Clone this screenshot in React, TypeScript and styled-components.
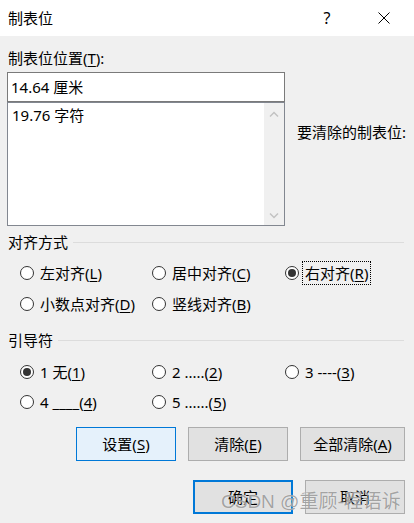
import React from "react";
import styled, { createGlobalStyle } from "styled-components";

const GlobalStyle = createGlobalStyle`
  html, body { margin: 0; padding: 0; background: #f0f0f0; }
  body {
    font-family: "Noto Sans", "Noto Sans CJK SC", sans-serif;
    font-size: 15px;
    color: #000;
  }
  * { box-sizing: border-box; }
`;

const Dialog = styled.div`
  position: relative;
  width: 414px;
  height: 523px;
  background: #f0f0f0;
  overflow: hidden;
`;

const TitleBar = styled.div`
  height: 36px;
  background: #fff;
  display: flex;
  align-items: center;
  padding-left: 8px;
  padding-right: 7px;
`;

const Title = styled.div`
  flex: 1;
  font-size: 15px;
  line-height: 20px;
  font-family: "Noto Sans CJK SC", sans-serif;
`;

const TitleButton = styled.div`
  width: 46px;
  height: 36px;
  display: flex;
  align-items: center;
  justify-content: center;
  font-size: 16px;
  color: #000;
  margin-left: ${(p: { $gap?: number }) => p.$gap ?? 0}px;
`;

const Content = styled.div`
  padding: 0 8px 0 7px;
`;

const FieldLabel = styled.div`
  margin-top: 12px;
  height: 20px;
  line-height: 20px;
  padding-left: 1px;
`;

const U = styled.span`
  text-decoration: underline;
  text-underline-offset: 2px;
`;

const TopRow = styled.div`
  display: flex;
  margin-top: 4px;
`;

const LeftCol = styled.div`
  width: 278px;
  display: flex;
  flex-direction: column;
`;

const Input = styled.div`
  height: 30px;
  border: 1px solid #7a7a7a;
  background: #fff;
  padding: 0 0 0 3px;
  line-height: 28px;
`;

const ListBox = styled.div`
  height: 124px;
  border: 1px solid #828790;
  background: #fff;
  display: flex;
`;

const ListItems = styled.div`
  flex: 1;
  padding: 2px 0 0 4px;
  line-height: 20px;
`;

const ScrollBar = styled.div`
  width: 20px;
  background: #f0f0f0;
  display: flex;
  flex-direction: column;
  justify-content: space-between;
  align-items: center;
  padding: 8px 0 6px;
`;

const SideLabel = styled.div`
  margin-left: 12px;
  margin-top: 50px;
  line-height: 20px;
  white-space: nowrap;
`;

const GroupHeader = styled.div`
  display: flex;
  align-items: center;
  gap: 5px;
  margin-top: ${(p: { $mt: number }) => p.$mt}px;
  height: 20px;
  line-height: 20px;
  padding-left: 1px;
`;

const HeaderLine = styled.div`
  flex: 1;
  height: 1px;
  background: #dcdcdc;
  margin-right: 2px;
`;

const RadioGrid = styled.div`
  display: grid;
  grid-template-columns: 132px 133px 1fr;
  row-gap: ${(p: { $rowGap: number; $mt: number }) => p.$rowGap}px;
  margin-top: ${(p) => p.$mt}px;
  padding-left: 13px;
`;

const RadioItem = styled.div`
  display: flex;
  align-items: center;
  height: 24px;
`;

const RadioCircle = styled.span<{ $checked?: boolean }>`
  width: 14px;
  height: 14px;
  border-radius: 50%;
  border: 1px solid #333;
  background: #fff;
  display: flex;
  align-items: center;
  justify-content: center;
  flex: none;
  &::after {
    content: "";
    width: 8px;
    height: 8px;
    border-radius: 50%;
    background: #333;
    display: ${(p) => (p.$checked ? "block" : "none")};
  }
`;

const RadioText = styled.span<{ $focus?: boolean }>`
  margin-left: ${(p) => (p.$focus ? 3 : 6)}px;
  line-height: 20px;
  white-space: nowrap;
  padding: ${(p) => (p.$focus ? "1px 2px" : "0")};
  border: ${(p) => (p.$focus ? "1px dotted #000" : "none")};
`;

const ButtonRow = styled.div`
  display: flex;
  justify-content: flex-end;
  gap: 12px;
  margin-top: ${(p: { $mt: number }) => p.$mt}px;
  padding-right: 1px;
`;

const Button = styled.div<{ $w: number; $variant?: "hover" | "default" }>`
  width: ${(p) => p.$w}px;
  height: 34px;
  display: flex;
  align-items: center;
  justify-content: center;
  line-height: 20px;
  background: ${(p) => (p.$variant === "hover" ? "#e5f1fb" : "#e1e1e1")};
  border: ${(p) =>
    p.$variant === "hover"
      ? "1px solid #0078d7"
      : p.$variant === "default"
      ? "2px solid #0078d7"
      : "1px solid #adadad"};
`;

const Watermark = styled.div`
  position: absolute;
  left: 221px;
  top: 491px;
  font-family: "Liberation Sans", "Noto Sans CJK SC", sans-serif;
  font-size: 19px;
  line-height: 22px;
  color: rgba(140, 140, 140, 0.8);
  text-shadow: 0 0 1px rgba(255, 255, 255, 0.9);
  white-space: nowrap;
  pointer-events: none;
`;

const Chevron = ({ up }: { up?: boolean }) => (
  <svg width="10" height="6" viewBox="0 0 10 6">
    <path
      d={up ? "M1 5.5 L5 1.5 L9 5.5" : "M1 0.5 L5 4.5 L9 0.5"}
      fill="none"
      stroke="#c2c2c2"
      strokeWidth="1.4"
    />
  </svg>
);

const CloseIcon = () => (
  <svg width="12" height="12" viewBox="0 0 12 12">
    <path d="M0.5 0.5 L11.5 11.5 M11.5 0.5 L0.5 11.5" stroke="#000" strokeWidth="1" />
  </svg>
);

type Opt = { text: string; mk: string; checked?: boolean; focus?: boolean };

const Radio = ({ text, mk, checked, focus }: Opt) => (
  <RadioItem>
    <RadioCircle $checked={checked} />
    <RadioText $focus={focus}>
      {text}(<U>{mk}</U>)
    </RadioText>
  </RadioItem>
);

const alignOpts: Opt[] = [
  { text: "左对齐", mk: "L" },
  { text: "居中对齐", mk: "C" },
  { text: "右对齐", mk: "R", checked: true, focus: true },
  { text: "小数点对齐", mk: "D" },
  { text: "竖线对齐", mk: "B" },
];

const leaderOpts: Opt[] = [
  { text: "1 无", mk: "1", checked: true },
  { text: "2 .....", mk: "2" },
  { text: "3 ----", mk: "3" },
  { text: "4 ____", mk: "4" },
  { text: "5 ......", mk: "5" },
];

export default function App() {
  return (
    <Dialog>
      <GlobalStyle />
      <TitleBar>
        <Title>制表位</Title>
        <TitleButton>?</TitleButton>
        <TitleButton $gap={11}>
          <CloseIcon />
        </TitleButton>
      </TitleBar>
      <Content>
        <FieldLabel>
          制表位位置(<U>T</U>):
        </FieldLabel>
        <TopRow>
          <LeftCol>
            <Input>14.64 厘米</Input>
            <ListBox>
              <ListItems>19.76 字符</ListItems>
              <ScrollBar>
                <Chevron up />
                <Chevron />
              </ScrollBar>
            </ListBox>
          </LeftCol>
          <SideLabel>要清除的制表位:</SideLabel>
        </TopRow>

        <GroupHeader $mt={6}>
          对齐方式
          <HeaderLine />
        </GroupHeader>
        <RadioGrid $rowGap={7} $mt={9}>
          {alignOpts.map((o) => (
            <Radio key={o.mk} {...o} />
          ))}
        </RadioGrid>

        <GroupHeader $mt={14}>
          引导符
          <HeaderLine />
        </GroupHeader>
        <RadioGrid $rowGap={6} $mt={10}>
          {leaderOpts.map((o) => (
            <Radio key={o.mk} {...o} />
          ))}
        </RadioGrid>

        <ButtonRow $mt={13}>
          <Button $w={100} $variant="hover">
            设置(<U>S</U>)
          </Button>
          <Button $w={100}>
            清除(<U>E</U>)
          </Button>
          <Button $w={105}>
            全部清除(<U>A</U>)
          </Button>
        </ButtonRow>
        <ButtonRow $mt={19}>
          <Button $w={100} $variant="default">
            确定
          </Button>
          <Button $w={100}>取消</Button>
        </ButtonRow>
      </Content>
      <Watermark>CSDN @重顾-程语诉</Watermark>
    </Dialog>
  );
}
